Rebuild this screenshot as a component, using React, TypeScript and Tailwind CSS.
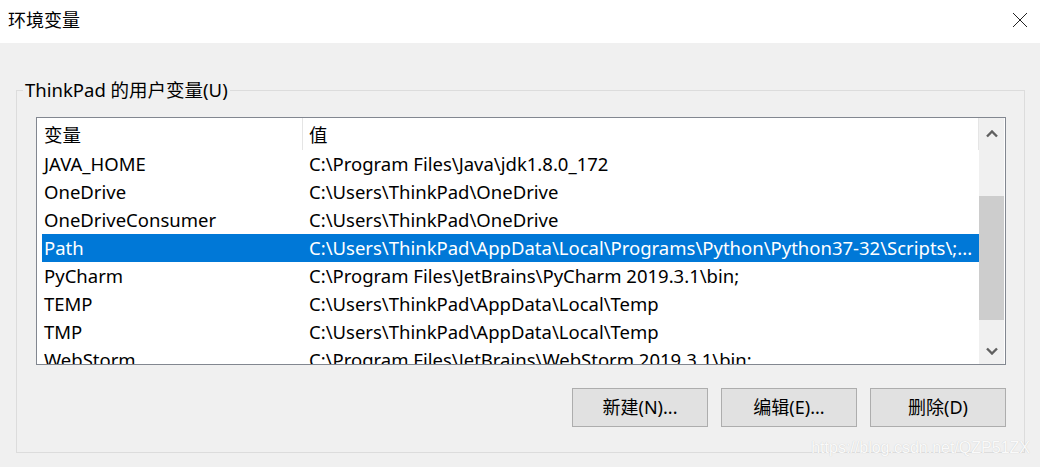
import React from "react";

// 环境变量 dialog — user variable list
const ROWS = [
  { name: "JAVA_HOME", value: "C:\\Program Files\\Java\\jdk1.8.0_172" },
  { name: "OneDrive", value: "C:\\Users\\ThinkPad\\OneDrive" },
  { name: "OneDriveConsumer", value: "C:\\Users\\ThinkPad\\OneDrive" },
  { name: "Path", value: "C:\\Users\\ThinkPad\\AppData\\Local\\Programs\\Python\\Python37-32\\Scripts\\;...", selected: true },
  { name: "PyCharm", value: "C:\\Program Files\\JetBrains\\PyCharm 2019.3.1\\bin;" },
  { name: "TEMP", value: "C:\\Users\\ThinkPad\\AppData\\Local\\Temp" },
  { name: "TMP", value: "C:\\Users\\ThinkPad\\AppData\\Local\\Temp" },
  { name: "WebStorm", value: "C:\\Program Files\\JetBrains\\WebStorm 2019.3.1\\bin;" },
];

const FONT = "font-['Segoe_UI','Noto_Sans','Noto_Sans_CJK_SC',sans-serif]";

function Chevron({ down }: { down?: boolean }) {
  return (
    <svg width="12" height="8" viewBox="0 0 12 8" className="text-[#606060]">
      <path
        d={down ? "M1 1.5 L6 6.5 L11 1.5" : "M1 6.5 L6 1.5 L11 6.5"}
        fill="none"
        stroke="currentColor"
        strokeWidth="2.4"
      />
    </svg>
  );
}

export default function App() {
  return (
    <div className={`w-[1040px] h-[467px] bg-[#f0f0f0] flex flex-col overflow-hidden text-black ${FONT}`}>
      {/* Title bar */}
      <div className="h-[43px] bg-white flex items-center justify-between pl-[8px] pr-[12px] shrink-0">
        <span className="text-[18px] leading-none -mt-[4px]">环境变量</span>
        <svg width="16" height="16" viewBox="0 0 16 16" className="-mt-[3px]">
          <path d="M1 1 L15 15 M15 1 L1 15" stroke="#222" strokeWidth="1" />
        </svg>
      </div>

      {/* Group box */}
      <fieldset className="ml-[16px] mr-[15px] mt-[36px] h-[374px] border border-[#dcdcdc] pl-[19px] pr-[18px] pt-[16px] flex flex-col">
        <legend className="-ml-[13px] px-[2px] text-[18.5px] leading-[22px]">ThinkPad 的用户变量(U)</legend>

        {/* List view */}
        <div className="h-[248px] border border-[#828790] bg-white flex">
          <div className="flex-1 flex flex-col overflow-hidden">
            <div className="h-[32px] flex items-center shrink-0 text-[18.5px]">
              <div className="w-[266px] h-full pl-[7px] pt-[2px] flex items-center border-r border-[#e5e5e5]">变量</div>
              <div className="flex-1 h-full pl-[6px] pt-[2px] flex items-center border-r border-[#e5e5e5]">值</div>
            </div>
            <div className="pl-[5px]">
              {ROWS.map((r) => (
                <div
                  key={r.name}
                  className={`h-[28px] flex items-center text-[18.5px] whitespace-nowrap ${
                    r.selected ? "bg-[#0078d7] text-white" : ""
                  }`}
                >
                  <div className="w-[266px] pl-[2px]">{r.name}</div>
                  <div className="flex-1 pl-[1px] overflow-hidden">{r.value}</div>
                </div>
              ))}
            </div>
          </div>

          {/* Scrollbar */}
          <div className="w-[25px] mr-[1px] bg-[#f0f0f0] flex flex-col items-center">
            <div className="h-[30px] flex items-center justify-center pt-[2px]">
              <Chevron />
            </div>
            <div className="h-[48px]" />
            <div className="w-full h-[124px] bg-[#cdcdcd]" />
            <div className="flex-1 flex items-end justify-center pb-[9px]">
              <Chevron down />
            </div>
          </div>
        </div>

        {/* Buttons */}
        <div className="flex justify-end gap-[13px] mt-[23px]">
          {["新建(N)...", "编辑(E)...", "删除(D)"].map((b) => (
            <button
              key={b}
              className="w-[136px] h-[39px] bg-[#e1e1e1] border border-[#adadad] text-[18px] flex items-center justify-center"
            >
              {b}
            </button>
          ))}
        </div>

        <div className="flex justify-end mt-[13px] -mr-[24px]">
          <span className="font-['Liberation_Sans',sans-serif] text-[16px] leading-none text-[#fafafa] [text-shadow:0_0_1px_#c4c4c4]">
            https://blog.csdn.net/QZP51ZX
          </span>
        </div>
      </fieldset>
    </div>
  );
}
